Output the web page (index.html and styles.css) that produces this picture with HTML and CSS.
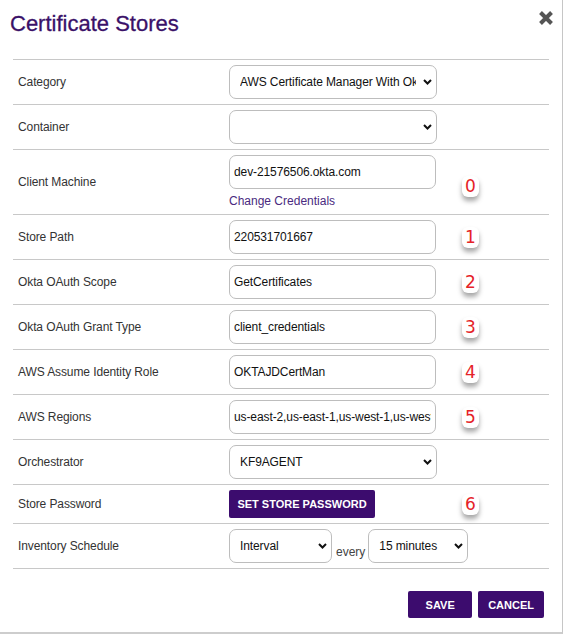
FILE: index.html
```html
<!DOCTYPE html>
<html lang="en">
<head>
<meta charset="utf-8">
<title>Certificate Stores</title>
<link rel="stylesheet" href="styles.css">
</head>
<body>
<div class="dialog">
  <div class="header">
    <h1 class="title">Certificate Stores</h1>
    <button class="close" aria-label="Close">
      <svg width="16" height="16" viewBox="0 0 16 16"><path d="M2.5 2.5 L13.5 13.5 M13.5 2.5 L2.5 13.5" stroke="#555" stroke-width="4" stroke-linecap="butt"/></svg>
    </button>
  </div>

  <div class="form">
    <div class="row">
      <div class="label">Category</div>
      <div class="value">
        <div class="select-wrap w-full">
          <select class="select"><option>AWS Certificate Manager With Okta</option></select>
          <svg class="chev" width="9" height="6" viewBox="0 0 9 6"><path d="M1 1 L4.5 4.5 L8 1" fill="none" stroke="#111" stroke-width="2"/></svg>
        </div>
      </div>
    </div>

    <div class="row">
      <div class="label">Container</div>
      <div class="value">
        <div class="select-wrap w-full">
          <select class="select"><option></option></select>
          <svg class="chev" width="9" height="6" viewBox="0 0 9 6"><path d="M1 1 L4.5 4.5 L8 1" fill="none" stroke="#111" stroke-width="2"/></svg>
        </div>
      </div>
    </div>

    <div class="row">
      <div class="label">Client Machine</div>
      <div class="value">
        <div class="stack">
          <input class="input" type="text" value="dev-21576506.okta.com">
          <a class="link" href="#">Change Credentials</a>
        </div>
        <span class="badge badge-low">0</span>
      </div>
    </div>

    <div class="row">
      <div class="label">Store Path</div>
      <div class="value">
        <input class="input" type="text" value="220531701667">
        <span class="badge">1</span>
      </div>
    </div>

    <div class="row">
      <div class="label">Okta OAuth Scope</div>
      <div class="value">
        <input class="input" type="text" value="GetCertificates">
        <span class="badge">2</span>
      </div>
    </div>

    <div class="row">
      <div class="label">Okta OAuth Grant Type</div>
      <div class="value">
        <input class="input" type="text" value="client_credentials">
        <span class="badge">3</span>
      </div>
    </div>

    <div class="row">
      <div class="label">AWS Assume Identity Role</div>
      <div class="value">
        <input class="input" type="text" value="OKTAJDCertMan">
        <span class="badge">4</span>
      </div>
    </div>

    <div class="row">
      <div class="label">AWS Regions</div>
      <div class="value">
        <input class="input" type="text" value="us-east-2,us-east-1,us-west-1,us-west-2">
        <span class="badge">5</span>
      </div>
    </div>

    <div class="row">
      <div class="label">Orchestrator</div>
      <div class="value">
        <div class="select-wrap w-full">
          <select class="select"><option>KF9AGENT</option></select>
          <svg class="chev" width="9" height="6" viewBox="0 0 9 6"><path d="M1 1 L4.5 4.5 L8 1" fill="none" stroke="#111" stroke-width="2"/></svg>
        </div>
      </div>
    </div>

    <div class="row">
      <div class="label">Store Password</div>
      <div class="value">
        <button class="btn btn-store">SET STORE PASSWORD</button>
        <span class="badge badge-far">6</span>
      </div>
    </div>

    <div class="row">
      <div class="label">Inventory Schedule</div>
      <div class="value">
        <div class="select-wrap w-interval">
          <select class="select"><option>Interval</option></select>
          <svg class="chev" width="9" height="6" viewBox="0 0 9 6"><path d="M1 1 L4.5 4.5 L8 1" fill="none" stroke="#111" stroke-width="2"/></svg>
        </div>
        <span class="every">every</span>
        <div class="select-wrap w-minutes">
          <select class="select"><option>15 minutes</option></select>
          <svg class="chev" width="9" height="6" viewBox="0 0 9 6"><path d="M1 1 L4.5 4.5 L8 1" fill="none" stroke="#111" stroke-width="2"/></svg>
        </div>
      </div>
    </div>
  </div>

  <div class="footer">
    <button class="btn btn-foot">SAVE</button>
    <button class="btn btn-foot">CANCEL</button>
  </div>
</div>
</body>
</html>
```

FILE: styles.css
```css
html, body {
  margin: 0;
  padding: 0;
  background: #ffffff;
}

body {
  font-family: "Liberation Sans", Arial, sans-serif;
  color: #333333;
}

.dialog {
  width: 562px;
  height: 632px;
  background: #ffffff;
  border-right: 1px solid #c6c6c6;
  border-bottom: 2px solid #cdcdcd;
}

.header {
  display: flex;
  justify-content: space-between;
  align-items: flex-start;
  height: 59px;
  box-sizing: border-box;
  padding: 11px 8px 0 10px;
}

.title {
  margin: 0;
  font-size: 22px;
  line-height: 26px;
  font-weight: normal;
  color: #3a1168;
  -webkit-text-stroke: 0.3px #3a1168;
}

.close {
  margin: -1px 0 0 0;
  padding: 0;
  border: none;
  background: none;
  width: 16px;
  height: 16px;
  display: block;
}

.close svg {
  display: block;
}

.form {
  margin: 0 13px;
  border-top: 1px solid #c8c8c8;
}

.row {
  display: grid;
  grid-template-columns: 216px 1fr;
  align-items: center;
  padding: 5px 0;
  border-bottom: 1px solid #c8c8c8;
}

.label {
  padding-left: 5px;
  font-size: 12px;
  letter-spacing: -0.1px;
  color: #333333;
}

.value {
  display: flex;
  align-items: center;
}

.stack {
  display: flex;
  flex-direction: column;
  align-items: flex-start;
}

.input {
  width: 207px;
  height: 34px;
  box-sizing: border-box;
  border: 1px solid #bdbdbd;
  border-radius: 7px;
  padding: 0 4px;
  font-family: "Liberation Sans", Arial, sans-serif;
  font-size: 12px;
  letter-spacing: -0.1px;
  color: #111111;
  background: #ffffff;
  outline: none;
}

.link {
  margin-top: 4px;
  line-height: 16px;
  font-size: 12px;
  color: #4a2a80;
  text-decoration: none;
}

.select-wrap {
  position: relative;
  height: 34px;
}

.w-full { width: 208px; }
.w-interval { width: 103px; }
.w-minutes { width: 100px; }

.select {
  -webkit-appearance: none;
  appearance: none;
  width: 100%;
  height: 34px;
  box-sizing: border-box;
  border: 1px solid #bdbdbd;
  border-radius: 7px;
  padding: 0 20px 0 10px;
  font-family: "Liberation Sans", Arial, sans-serif;
  font-size: 12px;
  letter-spacing: -0.1px;
  color: #111111;
  background: #ffffff;
  outline: none;
}

.chev {
  position: absolute;
  right: 5px;
  top: 14px;
  pointer-events: none;
}

.every {
  align-self: flex-end;
  margin: 0 3px 0 4px;
  padding-bottom: 4px;
  font-size: 12px;
  line-height: 14px;
  color: #444444;
}

.badge {
  display: inline-flex;
  align-items: center;
  justify-content: center;
  width: 17px;
  height: 21px;
  margin-left: 26px;
  background: #ffffff;
  border-radius: 6px;
  box-shadow: 0 4px 5px rgba(0, 0, 0, 0.35);
  font-family: "DejaVu Sans", sans-serif;
  font-size: 17px;
  line-height: 21px;
  color: #e52228;
}

.badge-low {
  margin-top: 9px;
}

.badge-far {
  margin-left: 87px;
}

.btn {
  height: 28px;
  border: none;
  border-radius: 2px;
  background: #3c0c6e;
  color: #ffffff;
  font-family: "Liberation Sans", Arial, sans-serif;
  font-size: 11px;
  font-weight: bold;
  padding: 0 9px;
  white-space: nowrap;
  cursor: pointer;
}

.btn-store {
  width: 146px;
  padding: 0;
}

.footer {
  display: flex;
  justify-content: flex-end;
  gap: 6px;
  margin: 22px 18px 0 0;
}

.btn-foot {
  min-width: 64px;
  height: 27px;
  padding: 0 10px;
}
```
